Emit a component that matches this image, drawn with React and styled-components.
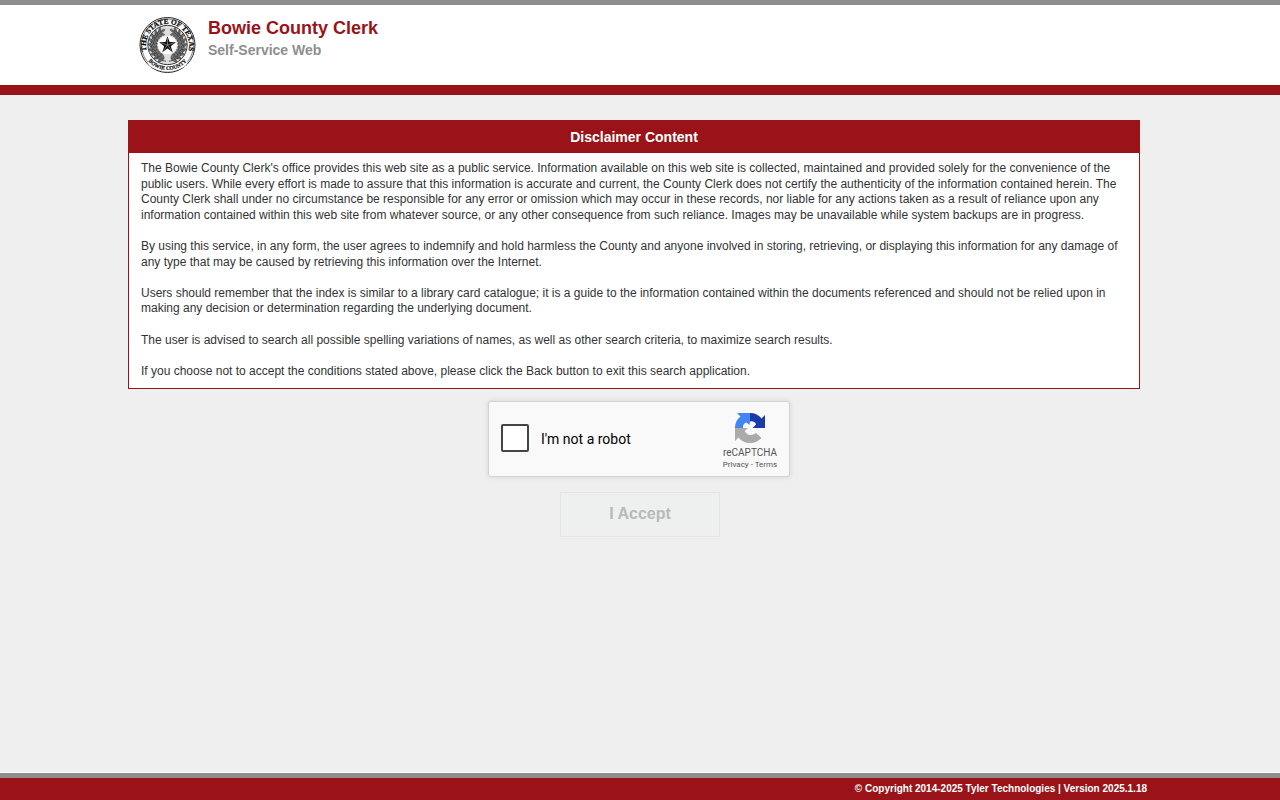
import React from "react";
import styled, { createGlobalStyle } from "styled-components";

const colors = {
  red: "#991318",
  gray: "#8e8e8e",
  page: "#efefef"
};

const GlobalStyle = createGlobalStyle`
  body {
    margin: 0;
    background: ${colors.page};
    font-family: "Liberation Sans", Arial, sans-serif;
    font-size: 12px;
    line-height: 1.3;
    color: #333;
  }
`;

const Page = styled.div`
  display: flex;
  flex-direction: column;
  min-height: 100vh;
`;

const Header = styled.header`
  box-sizing: border-box;
  min-height: 95px;
  padding: 11px calc(10% + 11px);
  border-top: 5px solid ${colors.gray};
  border-bottom: 10px solid ${colors.red};
  background: #fff;
  display: flex;
  gap: 12px;
  align-items: flex-start;
`;

const Titles = styled.div`
  display: flex;
  flex-direction: column;
`;

const Title = styled.h1`
  margin: 0;
  font-size: 18px;
  line-height: 24px;
  color: ${colors.red};
`;

const Subtitle = styled.h2`
  margin: 0;
  font-size: 14px;
  line-height: 20px;
  color: ${colors.gray};
`;

const Main = styled.main`
  flex: 1;
  padding: 25px 10%;
  display: flex;
  flex-direction: column;
`;

const Panel = styled.section`
  margin-right: 12px;
  border: 1px solid ${colors.red};
  background: #fff;
`;

const PanelTitle = styled.h3`
  margin: 0;
  font-size: 14px;
  line-height: 32px;
  text-align: center;
  color: #fff;
  background: ${colors.red};
`;

const PanelBody = styled.div`
  padding: 8px 12px 9px;
`;

const Paragraph = styled.p`
  margin: 0 0 1.3em;

  &:last-child {
    margin-bottom: 0;
  }
`;

const Form = styled.form`
  display: flex;
  flex-direction: column;
  align-items: center;
  gap: 15px;
  padding-top: 12px;
`;

const Captcha = styled.div`
  box-sizing: border-box;
  width: 302px;
  height: 76px;
  margin-right: 2px;
  padding: 0 8px 0 12px;
  border: 1px solid #d3d3d3;
  border-radius: 3px;
  background: #f9f9f9;
  box-shadow: 0 0 4px 1px rgba(0, 0, 0, 0.08);
  display: flex;
  align-items: center;
  justify-content: space-between;
  font-family: Roboto, sans-serif;
`;

const RobotLabel = styled.label`
  display: flex;
  align-items: center;
  gap: 12px;
  margin-bottom: 2px;
  font-size: 14px;
  line-height: 18px;
  color: #000;
`;

const RobotText = styled.span`
  padding-top: 2px;
`;

const RobotCheck = styled.input`
  appearance: none;
  box-sizing: border-box;
  width: 28px;
  height: 28px;
  margin: 0;
  border: 2px solid #444;
  border-radius: 2px;
  background: #fff;
`;

const Brand = styled.div`
  width: 62px;
  padding-top: 6px;
  display: flex;
  flex-direction: column;
  align-items: center;
  color: #555;
`;

const BrandName = styled.span`
  margin-top: 4px;
  font-size: 10px;
  line-height: 12px;
`;

const BrandLinks = styled.span`
  font-size: 8px;
  line-height: 12px;
`;

const BrandLink = styled.a`
  color: inherit;
  text-decoration: none;
`;

const AcceptButton = styled.button`
  width: 160px;
  height: 45px;
  padding: 0 0 2px;
  border: 1px solid #e3e4e5;
  background: #eeefef;
  font-family: inherit;
  font-size: 16px;
  font-weight: bold;
  color: #b7babb;
`;

const Footer = styled.footer`
  padding: 0 calc(10% + 5px) 0 10%;
  border-top: 5px solid ${colors.gray};
  box-shadow: 0 -1px #fff;
  background: ${colors.red};
  color: #fff;
  font-size: 10px;
  font-weight: bold;
  line-height: 22px;
  text-align: right;
`;

const WREATH = [-62, -46, -30, -14, 2, 18, 34, 50, 66];

const Leaves = ({ flip }) => (
  <g transform={flip ? "scale(-1 1)" : undefined}>
    <path d="M3 33A32 32 0 0 0 18 -27" fill="none" stroke="#222" strokeWidth="1.5" />
    {WREATH.map(a => (
      <g key={a} transform={`rotate(${a})`}>
        <ellipse cx="34" cy="0" rx="6" ry="2" transform="rotate(-38 34 0)" />
        <ellipse cx="25" cy="0" rx="6" ry="2" transform="rotate(-130 25 0)" />
        <ellipse cx="30" cy="-5" rx="5" ry="2" transform="rotate(-80 30 -5)" />
      </g>
    ))}
  </g>
);

// State seal with a wreath around the star
const Seal = () => (
  <svg width="57" height="58" viewBox="-58 -58 116 116" role="img" aria-label="Bowie County seal">
    <defs>
      <path id="seal-top" d="M-42 14A44 44 0 1 1 42 14" />
      <path id="seal-bottom" d="M-38 34A51 51 0 0 0 38 34" />
    </defs>
    <circle r="56" fill="#fff" stroke="#222" strokeWidth="2" />
    <circle r="53" fill="none" stroke="#555" strokeWidth="1.5" />
    <circle r="40" fill="#ddd" stroke="#333" strokeWidth="2" />
    <g fill="#777" stroke="#222" strokeWidth="1">
      <Leaves />
      <Leaves flip />
    </g>
    <circle r="19" fill="#fff" />
    <path d="M-43 33Q0 56 43 33L36 43Q0 64 -36 43Z" fill="#fff" />
    <path
      d="M0 -18L4.2 -6L17 -5.6L6.8 2.3L10.6 14.6L0 7.2L-10.6 14.6L-6.8 2.3L-17 -5.6L-4.2 -6Z"
      fill="#111"
    />
    <path d="M0 0V-14M0 0L13 -4M0 0L8 11M0 0L-8 11M0 0L-13 -4" stroke="#ccc" strokeWidth="1" />
    <g fontFamily="Liberation Serif, serif" fontWeight="bold" fill="#111" stroke="#111" textAnchor="middle">
      <text fontSize="15" strokeWidth="0.6">
        <textPath href="#seal-top" startOffset="50%">THE STATE OF TEXAS</textPath>
      </text>
      <text fontSize="11" strokeWidth="0.4">
        <textPath href="#seal-bottom" startOffset="50%">BOWIE COUNTY</textPath>
      </text>
    </g>
  </svg>
);

const CaptchaLogo = () => (
  <svg width="30" height="30" viewBox="0 0 30 30" aria-hidden="true">
    <path fill="#1c3aa9" d="M15 0C20 0 24 2 26.500 5.500L30 2V15H15Z" />
    <path fill="#4285f4" d="M15 0H2L5.500 3.500C2 6 0 10 0 15H15Z" />
    <path fill="#ababab" d="M0 15H15L20 19L26.500 25C23.500 28 20 30 15 30C10 30 6 28 3.500 24.500L0 28Z" />
    <path
      fill="#f9f9f9"
      d="M8 12.500Q9 10 11.500 9.500L14.500 12L15 8.500Q18 7.500 20.500 10L21 11.500L17.500 15H22L20.500 20.500Q16 23 12 21L9.500 18L13 15H8Z"
    />
  </svg>
);

const disclaimer = [
  "The Bowie County Clerk's office provides this web site as a public service. Information available on this web site is collected, maintained and provided solely for the convenience of the public users. While every effort is made to assure that this information is accurate and current, the County Clerk does not certify the authenticity of the information contained herein. The County Clerk shall under no circumstance be responsible for any error or omission which may occur in these records, nor liable for any actions taken as a result of reliance upon any information contained within this web site from whatever source, or any other consequence from such reliance. Images may be unavailable while system backups are in progress.",
  "By using this service, in any form, the user agrees to indemnify and hold harmless the County and anyone involved in storing, retrieving, or displaying this information for any damage of any type that may be caused by retrieving this information over the Internet.",
  "Users should remember that the index is similar to a library card catalogue; it is a guide to the information contained within the documents referenced and should not be relied upon in making any decision or determination regarding the underlying document.",
  "The user is advised to search all possible spelling variations of names, as well as other search criteria, to maximize search results.",
  "If you choose not to accept the conditions stated above, please click the Back button to exit this search application."
];

export default function App() {
  return (
    <Page>
      <GlobalStyle />
      <Header>
        <Seal />
        <Titles>
          <Title>Bowie County Clerk</Title>
          <Subtitle>Self-Service Web</Subtitle>
        </Titles>
      </Header>
      <Main>
        <Panel>
          <PanelTitle>Disclaimer Content</PanelTitle>
          <PanelBody>
            {disclaimer.map(text => (
              <Paragraph key={text}>{text}</Paragraph>
            ))}
          </PanelBody>
        </Panel>
        <Form>
          <Captcha>
            <RobotLabel htmlFor="robot">
              <RobotCheck type="checkbox" id="robot" />
              <RobotText>I'm not a robot</RobotText>
            </RobotLabel>
            <Brand>
              <CaptchaLogo />
              <BrandName>reCAPTCHA</BrandName>
              <BrandLinks>
                <BrandLink href="#privacy">Privacy</BrandLink>
                {" - "}
                <BrandLink href="#terms">Terms</BrandLink>
              </BrandLinks>
            </Brand>
          </Captcha>
          <AcceptButton type="submit" disabled>I Accept</AcceptButton>
        </Form>
      </Main>
      <Footer>© Copyright 2014-2025 Tyler Technologies | Version 2025.1.18</Footer>
    </Page>
  );
}
